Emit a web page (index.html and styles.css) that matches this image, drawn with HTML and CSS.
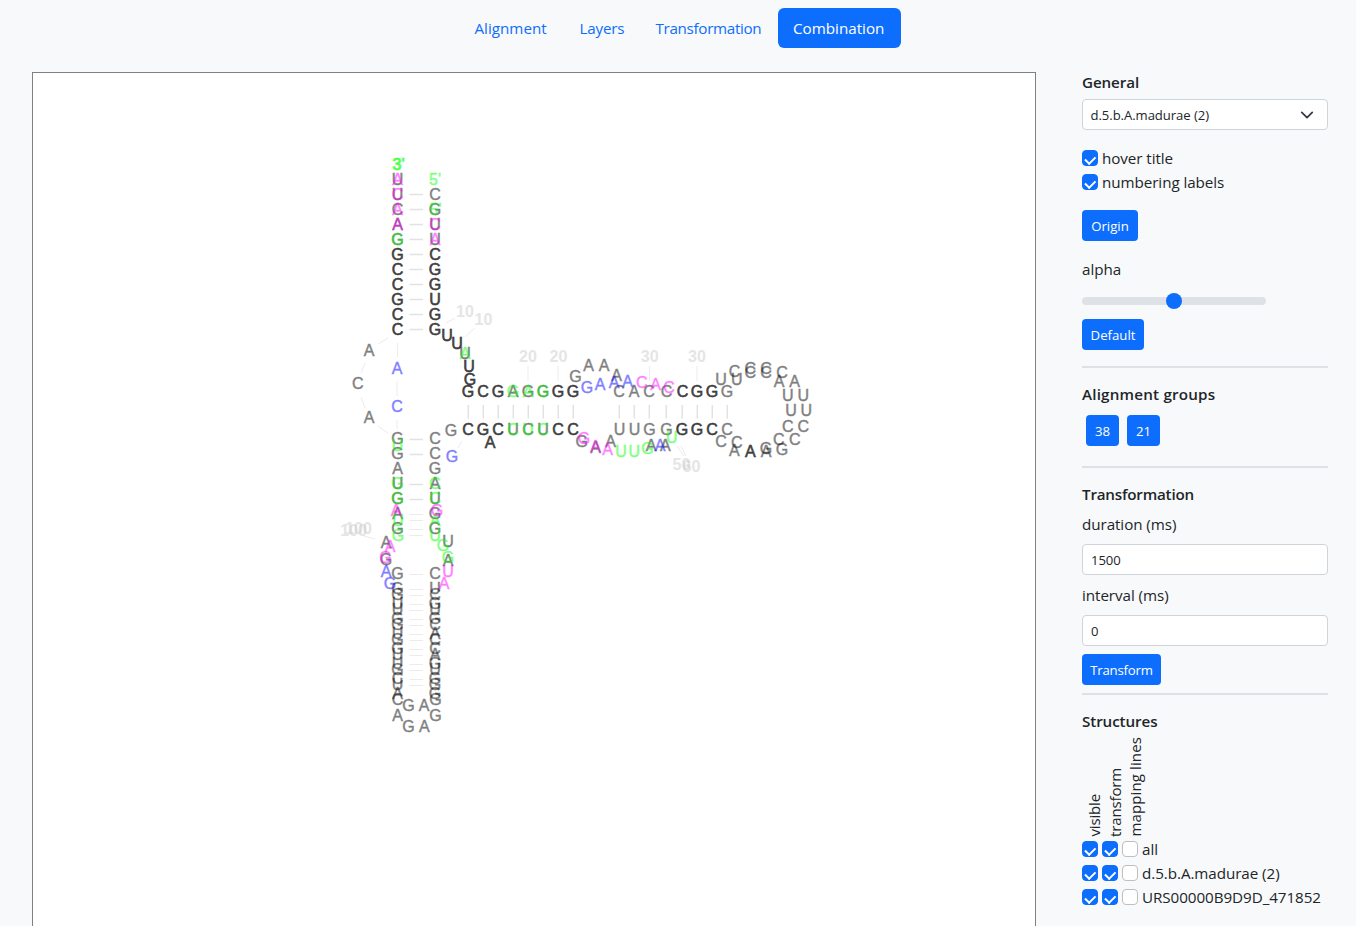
FILE: index.html
```html
<!DOCTYPE html>
<html lang="en">
<head>
<meta charset="utf-8">
<title>Combination</title>
<link rel="stylesheet" href="styles.css">
</head>
<body>
<div class="page">
  <nav class="tabs">
    <a class="tab"><span>Alignment</span></a>
    <a class="tab"><span>Layers</span></a>
    <a class="tab"><span>Transformation</span></a>
    <a class="tab active"><span>Combination</span></a>
  </nav>
  <div class="content">
    <main class="canvas">
      <svg id="plot" class="plot" viewBox="33 73 1002 853" width="1002" height="853"></svg>
    </main>
    <aside class="sidebar">
      <section class="general">
        <h2>General</h2>
        <div class="field select"><span>d.5.b.A.madurae (2)</span>
          <svg class="chevron" viewBox="0 0 16 16"><path d="m2 5 6 6 6-6"/></svg>
        </div>
        <div class="checks">
          <label class="check-row"><i class="box on"></i><span>hover title</span></label>
          <label class="check-row"><i class="box on"></i><span>numbering labels</span></label>
        </div>
        <button class="btn origin">Origin</button>
        <div class="label">alpha</div>
        <div class="slider"><i class="thumb"></i></div>
        <button class="btn default">Default</button>
      </section>
      <section class="groups">
        <h2>Alignment groups</h2>
        <div class="group-list"><button class="btn">38</button><button class="btn">21</button></div>
      </section>
      <section class="transformation">
        <h2>Transformation</h2>
        <div class="label">duration (ms)</div>
        <div class="field">1500</div>
        <div class="label interval">interval (ms)</div>
        <div class="field">0</div>
        <button class="btn transform">Transform</button>
      </section>
      <section class="structures">
        <h2>Structures</h2>
        <div class="column-names"><span>visible</span><span>transform</span><span class="mapping">mapping lines</span></div>
        <div class="check-row"><i class="box on"></i><i class="box on"></i><i class="box"></i><span>all</span></div>
        <div class="check-row"><i class="box on"></i><i class="box on"></i><i class="box"></i><span>d.5.b.A.madurae (2)</span></div>
        <div class="check-row"><i class="box on"></i><i class="box on"></i><i class="box"></i><span>URS00000B9D9D_471852</span></div>
      </section>
    </aside>
  </div>
</div>
<script src="app.js"></script>
</body>
</html>
```
FILE: styles.css
```css
* { box-sizing: border-box; }
body {
  margin: 0;
  background: #fff;
  color: #212529;
  font: 15.2px/24px "Open Sans", "Noto Sans", sans-serif;
  letter-spacing: -.06px;
  overflow: hidden;
}
.page { width: 1356px; height: 926px; background: #f8f9fa; overflow: hidden; }
.tabs { display: flex; height: 72px; padding: 8px 0 24px 458.5px; }
.tab { padding: 8px 16px; color: #0d6efd; border-radius: 6px; white-space: nowrap; }
.tab:nth-child(1) { width: 105px; letter-spacing: 0; }
.tab:nth-child(2) { width: 76px; letter-spacing: -.2px; }
.tab:nth-child(3) { width: 138.5px; letter-spacing: -.31px; }
.tab.active { width: 123px; padding: 8px 15px; background: #0d6efd; color: #fff; letter-spacing: 0; }
.content { display: flex; gap: 46px; padding-left: 32px; }
.canvas { width: 1004px; height: 860px; background: #fff; border: 1px solid #808080; }
.plot { display: block; }
.plot text { font-family: "Liberation Sans", Arial, sans-serif; font-size: 16px; letter-spacing: 0; text-anchor: middle; stroke-width: .45px; }
.plot .k { fill: #000; stroke: #000; opacity: .5; }
.plot .g { fill: #0f0; stroke: #0f0; opacity: .5; }
.plot .m { fill: #f0f; stroke: #f0f; opacity: .5; }
.plot .b { fill: #00f; stroke: #00f; opacity: .5; }
.plot .label { fill: #ccc; opacity: .5; font-weight: bold; }
.plot path { fill: none; stroke: #e2e2e2; stroke-width: 1.5; }
.plot .link { stroke: #ececec; stroke-width: 1; }
.sidebar { width: 246px; }
h2 { margin: 0; font-size: 15.2px; line-height: 20px; font-weight: 600; letter-spacing: -.1px; }
.groups h2 { letter-spacing: .2px; }
.transformation h2 { letter-spacing: -.2px; }
.general { height: 296px; border-bottom: 2px solid #dee2e6; }
.field {
  display: flex; align-items: center; justify-content: space-between;
  height: 31px; padding: 0 8px; background: #fff;
  border: 1px solid #ced4da; border-radius: 4px; font-size: 13.1px;
}
.select { margin-top: 7px; padding: 0 13px 0 7.5px; }
.chevron { width: 14px; height: 14px; fill: none; stroke: #343a40; stroke-width: 2; stroke-linecap: round; stroke-linejoin: round; }
.checks { padding-top: 16px; }
.check-row { display: flex; align-items: center; gap: 4px; height: 24px; white-space: nowrap; }
.box { flex: none; width: 16px; height: 16px; border: 1px solid #bfbfbf; border-radius: 4px; background: #fff; }
.box.on { display: flex; justify-content: center; border-color: #0d6efd; background: #0d6efd; }
.box.on::after { content: ""; width: 4.5px; height: 7.5px; margin-top: 2.5px; border: solid #fff; border-width: 0 2px 2px 0; transform: rotate(45deg); }
.btn {
  display: block; height: 31px; padding: 1px 0 0; border: 0; border-radius: 4px;
  background: #0d6efd; color: #fff; font: 13.2px/30px "Open Sans", "Noto Sans", sans-serif;
}
.origin { width: 56px; margin: 16px 0; }
.slider { width: 184px; height: 8px; margin: 16px 0 14px; border-radius: 4px; background: #dee2e6; display: flex; justify-content: center; align-items: center; }
.thumb { width: 16px; height: 16px; border-radius: 50%; background: #0d6efd; }
.default { width: 62px; }
.groups { height: 100px; padding-top: 16px; border-bottom: 2px solid #dee2e6; }
.group-list { display: flex; gap: 8px; padding: 11px 0 0 4px; }
.group-list .btn { width: 33px; }
.transformation { height: 227px; padding-top: 16px; border-bottom: 2px solid #dee2e6; }
.transformation .label { padding-top: 8px; margin-bottom: 8px; }
.transform { width: 79px; margin-top: 8px; letter-spacing: -.2px; }
.structures { padding-top: 16px; }
.column-names { display: flex; align-items: flex-end; height: 106px; padding-bottom: 0; }
.column-names span { width: 20.5px; writing-mode: vertical-rl; transform: rotate(180deg); line-height: 24px; font-size: 15px; letter-spacing: -.15px; white-space: nowrap; }
.column-names .mapping { letter-spacing: .12px; }
```
FILE: app.js
```js
const plot = document.getElementById("plot");
const NS = "http://www.w3.org/2000/svg";

function text(cls, str, x, y) {
  const t = document.createElementNS(NS, "text");
  t.setAttribute("class", cls);
  t.setAttribute("x", x);
  t.setAttribute("y", y + 5.6);
  t.textContent = str;
  plot.appendChild(t);
}
// Each entry is a residue followed by its centre.
function place(cls, list) {
  list.trim().split(/\s+/).forEach(e => {
    const [s, x, y] = e.split(",");
    text(cls, s, +x, +y);
  });
}
function column(cls, str, x, y, dx, dy) {
  [...str].forEach((s, i) => { if (s !== "-") text(cls, s, x + i * dx, y + i * dy); });
}
function stroke(cls, d) {
  const path = document.createElementNS(NS, "path");
  path.setAttribute("class", cls);
  path.setAttribute("d", d);
  plot.appendChild(path);
}

// Base pair bonds
let strong = "";
let faint = "";
const across = y => `M409.5 ${y + .5}H423`;
for (let y = 194; y <= 329; y += 15) strong += across(y);
[439, 454, 484, 499].forEach(y => { strong += across(y); });
[514, 520, 529, 535, 574].forEach(y => { faint += across(y); });
for (let y = 589; y <= 679; y += 15) faint += across(y) + across(y + 6);
[468, 483, 498, 513, 528, 543, 558, 573, 682, 697, 712]
  .forEach(x => { strong += `M${x}.3 405V418.5`; });
[619, 634, 649, 666, 727].forEach(x => { strong += `M${x}.3 405V418.5`; });
// Label leaders and backbone links
[528, 558, 649.5, 697].forEach(x => { faint += `M${x} 366V381`; });
faint += "M446 323L455 318M465 337L475 328M677 446L684 456M681 446L686 456M364 536L375 539"
   + "M388 338L378 344M397.5 343V357M365 363L361 373M397 381V396M361 397L365 408M378 426L388 433M397 420V429M462 441L458 448";
stroke("bond", strong);
stroke("link", faint);

place("label", "10,465,311 10,483.5,319 20,528,356 20,558.5,356 30,649.7,356 30,697,356 50,681.5,464 60,691.5,466 100,353.5,530.5 100,358.5,528");

// First structure
column("k", "UUCAGGCCGCC", 397.5, 179, 0, 15);
column("k", "CGUUCGGUGG", 435, 194, 0, 15);
column("k", "GCGAGGGG", 468, 391.5, 15, 0);
column("k", "CGCUCUCC", 468, 429.3, 15, 0);
place("k", "U,447,335 U,457,343 U,465,353 U,469,366 G,470,379 G,451,430.5 A,490,442");
place("k", "A,369,350.5 C,357.7,383 A,369,417.3");
column("k", "GGAUGAG", 397.5, 438.3, 0, 15);
column("k", "CCGAUGG", 435, 438.3, 0, 15);
place("k", "A,386,542 G,386,559 U,448,541 A,448,560");
column("k", "GGUGUGUCA", 397.5, 573.5, 0, 15);
column("k", "CUGGACGGG", 435, 573.5, 0, 15);
place("k", "G,575.5,376 A,588.5,365.7 A,604,365.7 A,616.7,375.7 C,619,391.5 A,634,391.5 C,649,391.5 C,666.5,391.5 C,682.5,391.5 G,697,391.5 G,712,391.5 G,727,391.5");
place("k", "G,581.7,441 A,595.7,447 A,610.7,441 U,619.5,429.3 U,634.5,429.3 G,649.5,429.3 G,666.5,429.3 G,682,429.3 G,697,429.3 C,712,429.3 C,727,429.3 A,651,445 A,665.3,445");
place("k", "U,721,379 C,734.5,371 C,750.3,368 C,766,368 C,782,372.3 A,794.7,381.7 U,803.3,395 U,806.3,410 C,803.3,426.3 C,794.7,439.3 G,782,449.3 A,766,451.3 A,750.3,451.3 C,736.7,442");
place("k", "C,397.5,699.5 G,408.5,705 A,424,705 G,435.5,699.5 A,397.5,715.3 G,435.5,715.3 G,408.5,726.3 A,424.3,726.3");

// Second structure
column("k", "GCCGCC", 397.5, 254, 0, 15);
column("k", "CGGUGG", 435, 254, 0, 15);
column("k", "GCG---GG", 468, 391.5, 15, 0);
column("k", "CGC---CC", 468, 429.3, 15, 0);
place("k", "U,447,335 U,457,343 U,469,366 G,470,379 A,490,442 C,682.5,391.5 G,697,391.5 G,712,391.5 G,682,429.3 G,697,429.3 C,712,429.3");
place("k", "U,736.7,379 C,750.3,372 C,766,372 A,779,381.7 U,787.7,395 U,791,410 C,787.7,426.3 C,778.7,439.3 G,766,448 A,750.3,451.3 A,734.3,450.3 C,721,441");
column("k", "GUGGUGU", 397.5, 594.5, 0, 15);
column("k", "CUCCAUG", 435, 594.5, 0, 15);

place("g", "3',398,164 3',399,164 5',435,179.5 5',435.5,209.5 G,397.5,239 A,465,353 G,513,391.5 A,528,391.5 G,543,391.5 C,513,429.3 U,528,429.3 C,543,429.3");
place("g", "U,397.5,445 G,397.5,483.3 G,397.5,498.3 U,398,520 G,398,535 C,435,483.3 C,435,498.3 A,435,520 U,435,535 G,443,545 G,448,557 U,621,451.3 U,634.3,451.3 G,647.5,448.7 U,671.7,437.3");
place("m", "A,397.5,179 C,397.5,194 A,397.5,209 A,397.5,224 C,435,224 A,435,239 A,396,510 G,437,510 A,390,546 G,385.5,557 U,448,571 A,444,583 C,641.7,382 A,655.7,384 C,669,387 G,584,438 A,595.5,446 A,607.7,449");
place("b", "A,397,368 C,397,406 G,452,456.3 A,386,571.5 G,390,583.3 G,587,387 A,600,384 A,614,382.5 A,627.5,381.7 A,660,445");
```
